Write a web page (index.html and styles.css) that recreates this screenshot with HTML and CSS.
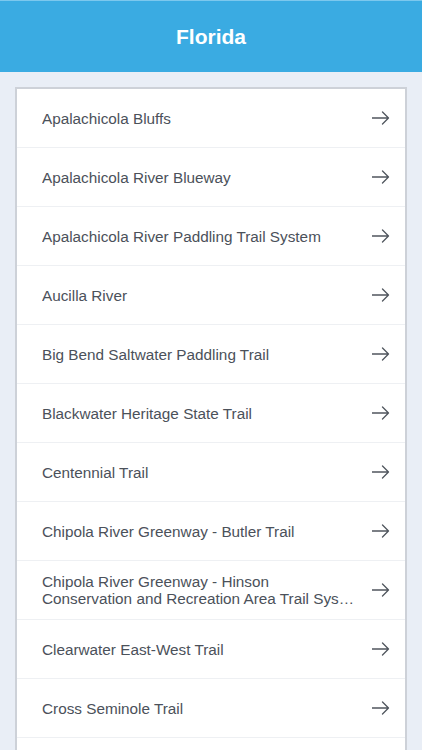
FILE: index.html
```html
<!DOCTYPE html>
<html>
<head>
<meta charset="utf-8">
<link rel="stylesheet" href="styles.css">
</head>
<body>
<header class="topbar"><h1 class="title">Florida</h1></header>
<main class="content">
  <ul class="list">
    <li class="row"><span class="label">Apalachicola Bluffs</span><svg class="arrow" viewBox="0 0 18 14"><path d="M0 7H16.5M10.5 1L16.5 7L10.5 13"/></svg></li>
    <li class="row"><span class="label">Apalachicola River Blueway</span><svg class="arrow" viewBox="0 0 18 14"><path d="M0 7H16.5M10.5 1L16.5 7L10.5 13"/></svg></li>
    <li class="row"><span class="label">Apalachicola River Paddling Trail System</span><svg class="arrow" viewBox="0 0 18 14"><path d="M0 7H16.5M10.5 1L16.5 7L10.5 13"/></svg></li>
    <li class="row"><span class="label">Aucilla River</span><svg class="arrow" viewBox="0 0 18 14"><path d="M0 7H16.5M10.5 1L16.5 7L10.5 13"/></svg></li>
    <li class="row"><span class="label">Big Bend Saltwater Paddling Trail</span><svg class="arrow" viewBox="0 0 18 14"><path d="M0 7H16.5M10.5 1L16.5 7L10.5 13"/></svg></li>
    <li class="row"><span class="label">Blackwater Heritage State Trail</span><svg class="arrow" viewBox="0 0 18 14"><path d="M0 7H16.5M10.5 1L16.5 7L10.5 13"/></svg></li>
    <li class="row"><span class="label">Centennial Trail</span><svg class="arrow" viewBox="0 0 18 14"><path d="M0 7H16.5M10.5 1L16.5 7L10.5 13"/></svg></li>
    <li class="row"><span class="label">Chipola River Greenway - Butler Trail</span><svg class="arrow" viewBox="0 0 18 14"><path d="M0 7H16.5M10.5 1L16.5 7L10.5 13"/></svg></li>
    <li class="row"><span class="label two"><span class="line">Chipola River Greenway - Hinson</span><span class="line">Conservation and Recreation Area Trail System</span></span><svg class="arrow" viewBox="0 0 18 14"><path d="M0 7H16.5M10.5 1L16.5 7L10.5 13"/></svg></li>
    <li class="row"><span class="label">Clearwater East-West Trail</span><svg class="arrow" viewBox="0 0 18 14"><path d="M0 7H16.5M10.5 1L16.5 7L10.5 13"/></svg></li>
    <li class="row"><span class="label">Cross Seminole Trail</span><svg class="arrow" viewBox="0 0 18 14"><path d="M0 7H16.5M10.5 1L16.5 7L10.5 13"/></svg></li>
    <li class="row row-partial"></li>
  </ul>
</main>
</body>
</html>
```
FILE: styles.css
```css
* { box-sizing: border-box; }
html, body { margin: 0; padding: 0; }
body {
  width: 422px;
  height: 750px;
  overflow: hidden;
  background: #e9eef6;
  font-family: "Liberation Sans", Arial, sans-serif;
}
.topbar {
  height: 72px;
  background: #3aabe2;
  border-top: 1px solid #7cc8ee;
  display: flex;
  align-items: center;
  justify-content: center;
}
.title {
  margin: 0;
  color: #ffffff;
  font-size: 21px;
  font-weight: bold;
}
.content {
  padding: 15px 15px 0 15px;
}
.list {
  list-style: none;
  margin: 0;
  padding: 0;
  background: #ffffff;
  border: 2px solid #cdd1d8;
  border-bottom: none;
}
.row {
  height: 59px;
  display: flex;
  align-items: center;
  padding: 0 15px 0 25px;
  border-bottom: 1px solid #eef0f3;
}
.row-partial {
  height: 13px;
  border-bottom: none;
}
.label {
  flex: 1;
  min-width: 0;
  color: #4b515a;
  font-size: 15.3px;
  line-height: 17px;
  white-space: nowrap;
  overflow: hidden;
  text-overflow: ellipsis;
  padding-right: 20px;
}
.label.two {
  display: flex;
  flex-direction: column;
  padding-right: 16px;
}
.line {
  display: block;
  white-space: nowrap;
  overflow: hidden;
  text-overflow: ellipsis;
}
.arrow {
  width: 18px;
  height: 14px;
  flex: none;
  fill: none;
  stroke: #50565e;
  stroke-width: 1.3;
  stroke-linecap: round;
  stroke-linejoin: round;
}
```
